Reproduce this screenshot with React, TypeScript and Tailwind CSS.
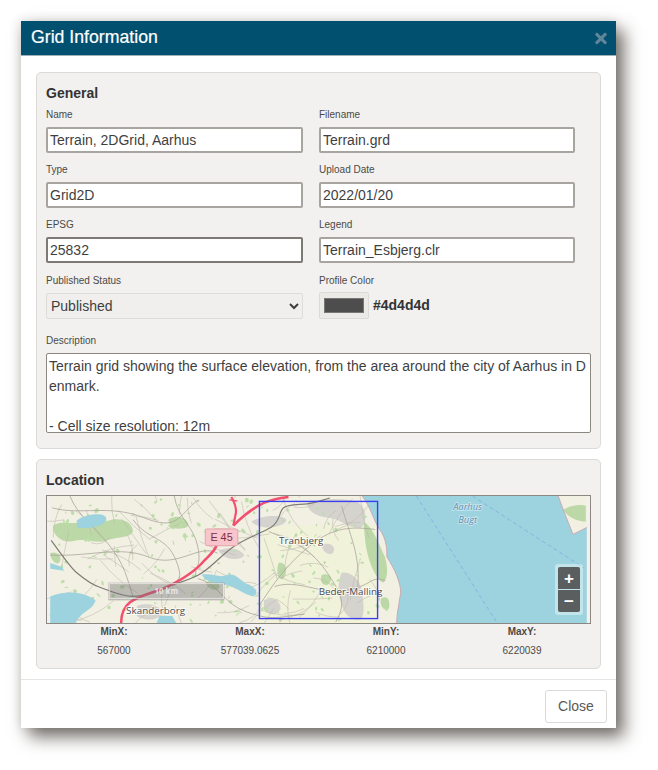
import React from 'react';
import { FaTimes } from 'react-icons/fa';

const FONT = "font-['Liberation_Sans',Arial,sans-serif]";

const Field: React.FC<{ label: string; className?: string; children: React.ReactNode }> = ({ label, className, children }) => (
    <div className={`h-[55px] ${className || ''}`}>
        <label className="block h-[15px] text-[10px] leading-[15px] text-[#4b4a48] mb-[5px]">{label}</label>
        {children}
    </div>
);

const TextInput: React.FC<{ value: string; dark?: boolean }> = ({ value, dark }) => (
    <input
        readOnly
        defaultValue={value}
        className={`block w-full h-[26px] bg-white border-2 rounded-[2px] px-[2px] text-[14px] text-[#3f3f3f] outline-none ${FONT} ${dark ? 'border-[#7d7a75]' : 'border-[#a8a5a0]'}`}
    />
);

// small seeded generator, the map texture has to look the same on every load
const rng = (seed: number) => () => {
    seed = (seed * 16807) % 2147483647;
    return seed / 2147483647;
};

const isLand = (x: number, y: number) => x < 316 + y * 0.32;

const r1 = rng(4711);
const SPECKS = Array.from({ length: 190 }, () => ({
    x: r1() * 345,
    y: r1() * 129,
    rx: 0.6 + r1() * 2.2,
    ry: 0.5 + r1() * 1.5,
    rot: r1() * 180,
})).filter(s => isLand(s.x, s.y));

const r2 = rng(90210);
const LANES = Array.from({ length: 95 }, () => {
    const x = r2() * 335;
    const y = r2() * 129;
    const a = r2() * Math.PI * 2;
    const l = 18 + r2() * 34;
    const bend = (r2() - 0.5) * 16;
    const ex = x + Math.cos(a) * l;
    const ey = y + Math.sin(a) * l;
    const mx = (x + ex) / 2 - Math.sin(a) * bend;
    const my = (y + ey) / 2 + Math.cos(a) * bend;
    return `M${x.toFixed(1)} ${y.toFixed(1)} Q${mx.toFixed(1)} ${my.toFixed(1)} ${ex.toFixed(1)} ${ey.toFixed(1)}`;
});

const ROADS = [
    'M2 12 C30 20 60 8 95 22 S130 20 150 4',
    'M0 60 C40 62 70 50 100 62 S150 48 170 58',
    'M20 0 C28 20 44 30 60 50 S78 84 84 102',
    'M84 24 C100 46 118 40 128 66 S124 84 120 94',
    'M126 0 C130 24 146 30 150 52 S146 70 148 82',
    'M150 84 C170 88 176 110 200 118 S226 124 258 120',
    'M212 112 C226 90 240 70 262 52 S300 30 330 34',
    'M222 36 C240 44 262 50 280 76 S300 110 290 128',
    'M228 92 C250 84 274 100 300 96 S326 80 340 86',
    'M296 10 C304 40 316 60 312 96',
];

const GREENS = [
    'M3 30 C12 24 22 30 34 26 C46 20 54 28 62 24 C72 22 84 26 84 36 C80 44 68 40 56 46 C44 48 36 42 22 46 C12 48 2 40 3 30Z',
    'M318 26 C326 30 332 44 340 62 C344 76 342 86 338 88 C330 84 322 64 320 46Z',
    'M120 24 C128 18 138 22 140 28 S128 34 122 32Z',
    'M336 104 C342 100 346 106 344 114 C340 118 334 112 336 104Z',
    'M158 88 C164 84 172 86 172 92 S160 96 158 88Z',
    'M232 68 C238 66 242 74 238 82 S228 78 232 68Z',
    'M276 80 C282 78 288 82 284 88 S272 88 276 80Z',
    'M0 58 C6 56 12 60 10 66 S0 66 0 58Z',
    'M521 14 C528 10 538 8 544 10 L544 26 C536 26 526 22 521 14Z',
];

const URBAN = [
    'M171 56 C180 50 194 54 197 60 C194 66 178 66 171 56Z',
    'M204 26 C214 20 234 18 240 24 C238 32 214 36 204 26Z',
    'M262 6 C280 2 300 2 312 6 C322 12 322 26 316 32 C304 34 296 24 284 22 C272 22 258 14 262 6Z',
    'M296 78 C304 76 314 84 316 94 C318 106 320 118 316 125 C306 128 298 120 296 110 C292 100 292 86 296 78Z',
    'M217 106 C224 102 234 106 234 114 C232 122 220 122 217 114Z',
    'M88 112 C96 108 110 110 114 118 C112 126 96 128 88 122Z',
    'M276 50 C282 46 290 50 288 56 S276 58 276 50Z',
];

const SEA = 'M317 0 C326 12 328 24 334 33 C342 44 342 54 342 62 C350 74 356 88 356 98 C354 112 352 120 352 129 L545 129 L545 32 L531 39 C526 26 520 12 516 0 Z';

const TerrainMap: React.FC = () => (
    <svg viewBox="0 0 545 129" className="block w-full h-full" fontFamily="'Open Sans', 'DejaVu Sans', sans-serif">
        <defs>
            <filter id="soft"><feGaussianBlur stdDeviation="0.35" /></filter>
        </defs>
        <g filter="url(#soft)">
            <rect width="545" height="129" fill="#f2efe3" />
            <rect x="212" y="30" width="120" height="99" fill="#f1f2da" />
            {URBAN.map((d, i) => <path key={i} d={d} fill="#d5d3ce" />)}
            {GREENS.map((d, i) => <path key={i} d={d} fill="#bcd8a6" />)}
            {SPECKS.map((s, i) => (
                <ellipse key={i} cx={s.x} cy={s.y} rx={s.rx} ry={s.ry} transform={`rotate(${s.rot} ${s.x} ${s.y})`} fill="#bcdfa8" />
            ))}
            {LANES.map((d, i) => <path key={i} d={d} fill="none" stroke="#bfbbaf" strokeWidth="0.6" />)}
            {ROADS.map((d, i) => <path key={i} d={d} fill="none" stroke="#a9a59b" strokeWidth="0.8" />)}

            {/* sea */}
            <path d={SEA} fill="#9dd3df" />
            <path d="M317 0 C326 12 328 24 334 33 C342 44 342 54 342 62 C350 74 356 88 356 98 C354 112 352 120 352 129" fill="none" stroke="#c7a9b2" strokeWidth="1" />
            <path d="M516 0 C520 12 526 26 531 39 L545 32" fill="none" stroke="#c7a9b2" strokeWidth="1" />
            <path d="M372 0 L454 129 M429 0 L542 73" fill="none" stroke="#7fb0e2" strokeWidth="0.9" strokeDasharray="4 3" />

            {/* lakes */}
            <path d="M27 25 C36 18 56 16 57 23 C56 31 38 34 27 32Z" fill="#9dd3df" />
            <path d="M0 102 C14 96 34 96 46 106 C44 116 30 118 26 129 L0 129Z" fill="#9dd3df" />
            <path d="M0 68 L12 72 L14 76 L0 74Z" fill="#9dd3df" />
            <path d="M154 80 C166 78 172 84 180 80 C190 78 194 88 202 90 C210 94 212 100 206 102 C196 100 188 92 178 90 C168 88 158 88 154 80Z" fill="#9dd3df" />
            <path d="M111 122 L124 122 L128 129 L108 129Z" fill="#9dd3df" />

            {/* rail and motorway */}
            <path d="M1 45 C12 60 20 72 27 78 S42 90 51 93 S72 102 84 102 S105 98 117 93 S140 86 151 80 S172 62 184 53 S214 38 224 32 S232 16 237 12 S252 9 261 8 S276 4 284 2" fill="none" stroke="#7e7c76" strokeWidth="1.2" />
            <path d="M72 129 C72 118 76 112 81 108 C92 100 106 98 117 93 C132 86 148 76 157 65 C162 60 167 56 169 50" fill="none" stroke="#f2506f" strokeWidth="2.6" />
            <path d="M186 30 C196 20 206 12 217 7 C226 3 234 2 242 1" fill="none" stroke="#f2506f" strokeWidth="2.6" />
            <path d="M184 1 C188 8 190 14 188 20 L186 30" fill="none" stroke="#f2506f" strokeWidth="2.2" />
            <path d="M182 4 L190 5" fill="none" stroke="#f2506f" strokeWidth="1.2" />
        </g>

        {/* scale bar */}
        <rect x="59" y="88" width="118" height="18" fill="#6f6f6f" fillOpacity="0.42" />
        <rect x="60" y="89" width="116" height="15" fill="none" stroke="#eeeeee" strokeOpacity="0.8" strokeWidth="1" />
        <text x="118" y="100" textAnchor="middle" fontSize="8" fontWeight="700" fill="#eeeeee" fillOpacity="0.9">10 km</text>

        {/* motorway shield */}
        <rect x="157.5" y="33.5" width="33" height="17" rx="2" fill="#f7c5cb" stroke="#e8a3ac" />
        <text x="174" y="46" textAnchor="middle" fontSize="11" fontFamily="'Liberation Sans', Arial, sans-serif" fill="#7d3040">E 45</text>

        {/* labels */}
        <g fontSize="10" fill="#4a4a4a" stroke="#ffffff" strokeOpacity="0.75" strokeWidth="2" paintOrder="stroke">
            <text x="255" y="49" textAnchor="middle">Tranbjerg</text>
            <text x="305" y="101" textAnchor="middle">Beder-Malling</text>
            <text x="107" y="120" textAnchor="middle">Skanderborg</text>
        </g>
        <g fontSize="9.5" fontStyle="italic" fill="#5b8fb5" textAnchor="middle" stroke="#ffffff" strokeOpacity="0.5" strokeWidth="1.5" paintOrder="stroke">
            <text x="424" y="14">Aarhus</text>
            <text x="424" y="27">Bugt</text>
        </g>

        {/* grid extent */}
        <rect x="212.5" y="5.5" width="120" height="119" fill="none" stroke="#3a3df0" strokeWidth="1.4" />
    </svg>
);

const Coord: React.FC<{ label: string; value: string }> = ({ label, value }) => (
    <div className="text-center text-[10px] text-[#4b4a48]">
        <div className="font-bold leading-[14px]">{label}</div>
        <div className="leading-[14px] mt-[5px]">{value}</div>
    </div>
);

const App: React.FC = () => {
    return (
        <div className={`w-[658px] h-[770px] bg-white pt-[21px] pl-[21px] overflow-hidden ${FONT}`}>
            <div className="w-[595px] h-[707px] flex flex-col bg-white shadow-[8px_9px_16px_rgba(70,65,58,0.75),-1px_0_10px_rgba(70,65,58,0.18)]">
                {/* Header */}
                <div className="h-[35px] shrink-0 bg-[#02506f] border-b border-[#9fb0b8] flex items-center justify-between pl-[10px] pr-[9px]">
                    <h2 className="text-[17.7px] leading-none font-normal text-white -mt-[1px] [-webkit-text-stroke:0.2px_white]">Grid Information</h2>
                    <FaTimes className="text-[#5f8699] w-[12px] h-[17px]" />
                </div>

                {/* Body */}
                <div className="flex-1 px-[15px] pt-[16px]">
                    <div className="h-[377px] bg-[#f2f1ef] border border-[#dcdad6] rounded-[5px] pl-[9px] pr-[10px]">
                        <h3 className="text-[14px] leading-[16px] font-bold text-[#333] pt-[12px] h-[34px]">General</h3>
                        <div className="w-[529px] grid grid-cols-[257px_256px] gap-x-[16px]">
                            <Field label="Name"><TextInput value="Terrain, 2DGrid, Aarhus" /></Field>
                            <Field label="Filename"><TextInput value="Terrain.grd" /></Field>
                            <Field label="Type"><TextInput value="Grid2D" /></Field>
                            <Field label="Upload Date"><TextInput value="2022/01/20" /></Field>
                            <Field label="EPSG"><TextInput value="25832" dark /></Field>
                            <Field label="Legend"><TextInput value="Terrain_Esbjerg.clr" /></Field>
                            <Field label="Published Status" className="mt-[1px]">
                                <select
                                    defaultValue="Published"
                                    className="block w-full h-[26px] bg-[#f0efed] border border-[#dedcd8] rounded-[2px] text-[14px] text-[#3f3f3f] outline-none"
                                >
                                    <option>Published</option>
                                    <option>Unpublished</option>
                                </select>
                            </Field>
                            <Field label="Profile Color" className="mt-[1px]">
                                <div className="flex items-center gap-[4px] -mt-[1px]">
                                    <div className="w-[50px] h-[27px] bg-[#eceae7] border border-[#dcdad6] rounded-[2px] flex items-center justify-center">
                                        <div className="w-[40px] h-[15px] bg-[#4d4d4d] border border-[#777]" />
                                    </div>
                                    <span className="text-[14px] font-bold text-[#333]">#4d4d4d</span>
                                </div>
                            </Field>
                        </div>
                        <label className="block mt-[5px] h-[15px] text-[10px] leading-[15px] text-[#4b4a48] mb-[5px]">Description</label>
                        <textarea
                            readOnly
                            defaultValue={'Terrain grid showing the surface elevation, from the area around the city of Aarhus in Denmark.\n\n- Cell size resolution: 12m'}
                            className={`block w-[545px] h-[80px] bg-white border border-[#8b8882] rounded-[2px] px-[2px] py-[2px] text-[14px] leading-[20px] text-[#3f3f3f] outline-none resize-none overflow-hidden break-all ${FONT}`}
                        />
                    </div>

                    <div className="mt-[10px] h-[210px] bg-[#f2f1ef] border border-[#dcdad6] rounded-[5px] pl-[9px] pr-[10px]">
                        <h3 className="text-[14px] leading-[16px] font-bold text-[#333] pt-[12px] h-[35px]">Location</h3>
                        <div className="relative w-[545px] h-[129px] border border-[#8b8882] overflow-hidden">
                            <TerrainMap />
                            <div className="absolute right-[7px] bottom-[8px] w-[28px] p-[3px] bg-white/40 rounded-[3px] flex flex-col gap-px">
                                <div className="h-[22px] bg-[#5a5e5f] rounded-t-[2px] flex items-center justify-center text-white text-[17px] leading-none font-bold">+</div>
                                <div className="h-[22px] bg-[#5a5e5f] rounded-b-[2px] flex items-center justify-center text-white text-[17px] leading-none font-bold">−</div>
                            </div>
                        </div>
                        <div className="w-[544px] grid grid-cols-4 pt-[1px]">
                            <Coord label="MinX:" value="567000" />
                            <Coord label="MaxX:" value="577039.0625" />
                            <Coord label="MinY:" value="6210000" />
                            <Coord label="MaxY:" value="6220039" />
                        </div>
                    </div>
                </div>

                {/* Footer */}
                <div className="h-[49px] shrink-0 border-t border-[#e6e5e3] flex justify-end items-start pt-[10px] pr-[9px]">
                    <button className="w-[62px] h-[33px] bg-white border border-[#dcdad6] rounded-[3px] text-[14px] text-[#5c5a56]">Close</button>
                </div>
            </div>
        </div>
    );
};

export default App;
